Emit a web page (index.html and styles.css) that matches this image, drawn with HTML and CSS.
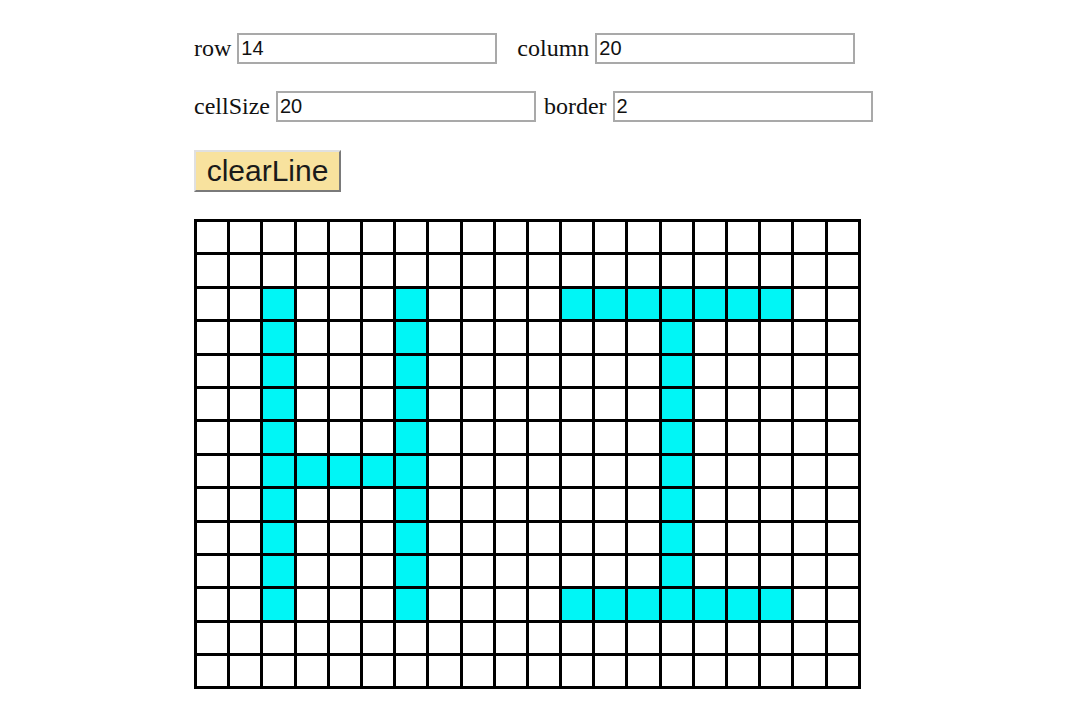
FILE: index.html
```html
<!DOCTYPE html>
<html>
<head>
<meta charset="utf-8">
<link rel="stylesheet" href="styles.css">
</head>
<body>
<div class="page">
  <div class="field-row">
    <label class="lbl">row</label><input class="num" type="text" value="14">
    <label class="lbl lbl-gap-lg">column</label><input class="num" type="text" value="20">
  </div>
  <div class="field-row row2">
    <label class="lbl">cellSize</label><input class="num" type="text" value="20">
    <label class="lbl lbl-gap-sm">border</label><input class="num" type="text" value="2">
  </div>
  <button class="clear-btn">clearLine</button>
  <div class="grid" id="grid"></div>
</div>
<script src="script.js"></script>
</body>
</html>
```
FILE: script.js
```js
var rows = 14, cols = 20;
var on = {};
function mark(r, c) { on[r + "," + c] = true; }
for (var r = 2; r <= 11; r++) { mark(r, 2); mark(r, 6); mark(r, 14); }
mark(7, 3); mark(7, 4); mark(7, 5);
for (var c = 11; c <= 17; c++) { mark(2, c); mark(11, c); }
var g = document.getElementById("grid");
for (var i = 0; i < rows; i++) {
  for (var j = 0; j < cols; j++) {
    var d = document.createElement("div");
    d.className = on[i + "," + j] ? "cell cell-on" : "cell";
    g.appendChild(d);
  }
}
```
FILE: styles.css
```css
html, body {
  margin: 0;
  padding: 0;
  background: #ffffff;
}
.page {
  padding: 33px 0 0 194px;
  font-family: "Liberation Serif", "Times New Roman", serif;
  font-size: 24px;
  color: #111;
}
.field-row {
  display: flex;
  align-items: center;
  height: 31px;
}
.row2 {
  margin-top: 27px;
}
.lbl {
  margin-right: 6px;
  line-height: 31px;
}
.lbl-gap-lg {
  margin-left: 20px;
}
.lbl-gap-sm {
  margin-left: 8px;
}
.num {
  box-sizing: border-box;
  width: 260px;
  height: 31px;
  border: 2px solid #a9a9a9;
  padding: 0 2px;
  font-family: "Liberation Sans", Arial, sans-serif;
  font-size: 20px;
  color: #111;
  background: #fff;
  outline: none;
}
.clear-btn {
  display: block;
  box-sizing: border-box;
  margin-top: 28px;
  width: 147px;
  height: 42px;
  padding: 0;
  background: #f8e29e;
  border: 2px solid;
  border-color: #e0e0e0 #7a7a7a #7a7a7a #e0e0e0;
  font-family: "Liberation Sans", Arial, sans-serif;
  font-size: 30px;
  color: #1a1a1a;
}
.grid {
  margin-top: 27px;
  display: grid;
  grid-template-columns: repeat(20, 30.2px);
  grid-auto-rows: 30.4px;
  gap: 3px;
  padding: 3px;
  background: #000;
  width: max-content;
}
.cell {
  background: #fff;
}
.cell-on {
  background: #00f6f6;
}
```
